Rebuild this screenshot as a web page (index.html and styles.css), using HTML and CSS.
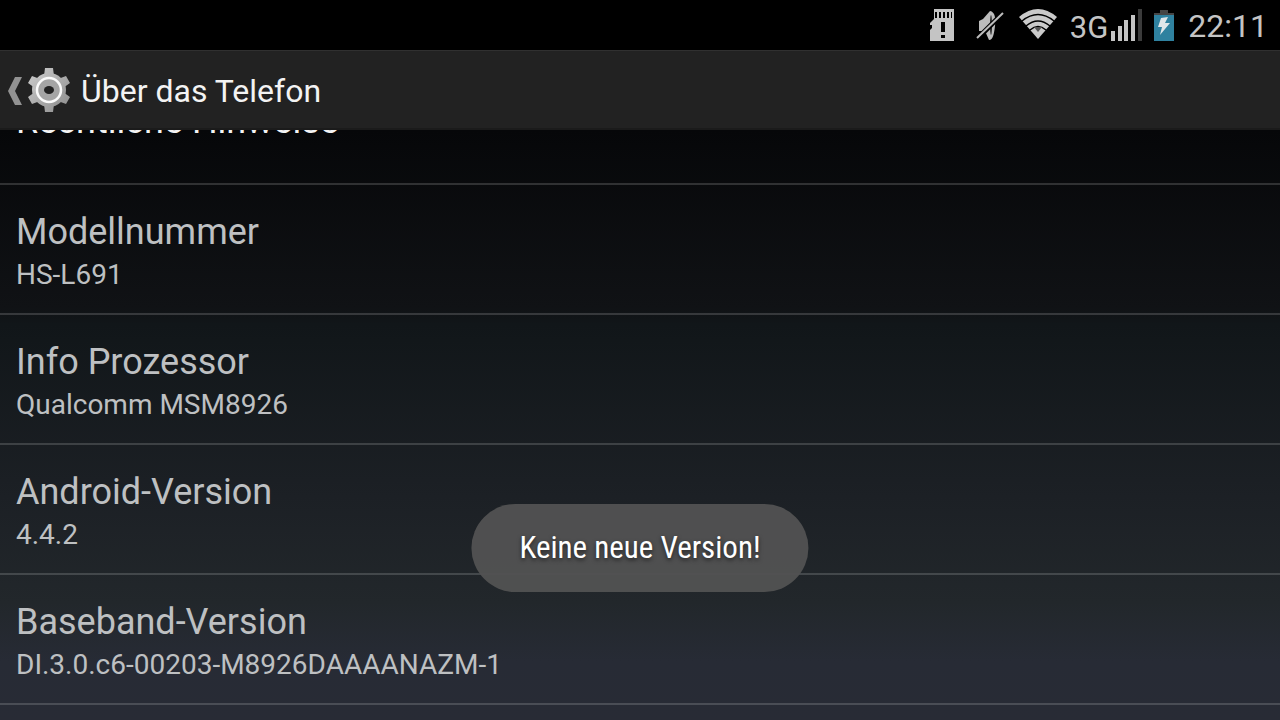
FILE: index.html
```html
<!DOCTYPE html>
<html lang="de">
<head>
<meta charset="utf-8">
<meta name="viewport" content="width=device-width, initial-scale=1">
<title>Über das Telefon</title>
<link rel="stylesheet" href="styles.css">
</head>
<body>
<div class="status-bar">
  <svg class="icon-sd" width="24" height="32" viewBox="0 0 24 32" aria-hidden="true">
    <path fill="#c4c4c4" d="M4 0H24V32H0V21L2 19V16H0V14L4 10Z"/>
    <path fill="#000" d="M5 3h2v6H5zM9 3h2v6H9zM13 3h2v6h-2zM17 3h2v6h-2zM21 3h1v6h-1zM11 13h4v10h-4zM11 26h4v3h-4z"/>
  </svg>
  <svg class="icon-mute" width="28" height="32" viewBox="0 0 28 32" aria-hidden="true">
    <path fill="#bcbcbc" d="M3 12L7 10L14 2C19 3 20 9 19 17C18 25 17 31 13 31L9 22H3Z"/>
    <ellipse cx="15" cy="16" rx="1" ry="10" fill="#222"/>
    <path stroke="#000" stroke-width="5" d="M2 29L26 5"/>
    <path stroke="#bcbcbc" stroke-width="2" d="M1 29L27 4"/>
  </svg>
  <svg class="icon-wifi" width="40" height="32" viewBox="0 0 40 32" aria-hidden="true">
    <path fill="#cacaca" d="M1 8Q20 -8 39 8L20 30Z"/>
    <path fill="none" stroke="#000" stroke-width="1.5" d="M4 12Q20 -1 36 12M8 17Q20 7 32 17M12 21Q20 14 28 21"/>
    <path fill="#555" d="M16 18H24L20 23Z"/>
  </svg>
  <span class="network">3G</span>
  <svg class="icon-signal" width="32" height="32" viewBox="0 0 32 32" aria-hidden="true">
    <path fill="#c4c4c4" d="M1 22h4v10H1zM8 17h4v15H8zM14 11h4v21h-4zM21 6h4v26h-4z"/>
    <path fill="#3b3b3b" d="M28 0h4v32h-4z"/>
  </svg>
  <svg class="icon-battery" width="20" height="32" viewBox="0 0 20 32" aria-hidden="true">
    <path fill="#454545" d="M6 1h8v3h6v3H0V4h6z"/>
    <path fill="#2f819f" d="M0 6h20v26H0z"/>
    <path fill="#e0e7ea" d="M7 9L14 8L11 14L16 14L6 26L8 18L4 18Z"/>
  </svg>
  <time class="clock">22:11</time>
</div>

<header class="action-bar">
  <button class="up-button" type="button" aria-label="Zurück">
    <svg width="72" height="48" viewBox="0 0 72 48" aria-hidden="true">
      <defs>
        <linearGradient id="metal" x1="0" y1="0" x2="1" y2="1">
          <stop offset="0" stop-color="#cecece"/>
          <stop offset="1" stop-color="#8c8c8c"/>
        </linearGradient>
      </defs>
      <path fill="#929292" d="M15 11H22L15 25L22 39H15L8 25Z"/>
      <g fill="url(#metal)">
        <circle cx="49" cy="24" r="17"/>
        <path d="M45 2h8l1 8H44zM45 46h8l1-8H44zM32 10l-4 7 7 5 5-9zM66 10l4 7-7 5-5-9zM32 38l-4-7 7-5 5 9zM66 38l4-7-7-5-5 9z"/>
      </g>
      <circle cx="49" cy="24" r="12" fill="#a5a5a5" stroke="#fafafa" stroke-width="2.5"/>
      <ellipse cx="49" cy="24" rx="5" ry="4" fill="#222"/>
    </svg>
  </button>
  <h1 class="title">Über das Telefon</h1>
</header>

<main class="content">
  <ul class="list">
    <li class="row row-link"><h2 class="row-title">Rechtliche Hinweise</h2></li>
    <li class="row"><h2 class="row-title">Modellnummer</h2><p class="row-summary">HS-L691</p></li>
    <li class="row"><h2 class="row-title">Info Prozessor</h2><p class="row-summary">Qualcomm MSM8926</p></li>
    <li class="row"><h2 class="row-title">Android-Version</h2><p class="row-summary">4.4.2</p></li>
    <li class="row"><h2 class="row-title">Baseband-Version</h2><p class="row-summary">DI.3.0.c6-00203-M8926DAAAANAZM-1</p></li>
  </ul>
</main>

<div class="toast" role="status">Keine neue Version!</div>
</body>
</html>
```

FILE: styles.css
```css
* { box-sizing: border-box; }

body {
  margin: 0;
  height: 100vh;
  display: flex;
  flex-direction: column;
  overflow: hidden;
  position: relative;
  background: #000;
  color: #bec0c2;
  font-family: Roboto, "Noto Sans", sans-serif;
}

h1, h2, p, ul { margin: 0; padding: 0; font-weight: 400; }

.status-bar {
  flex: none;
  display: flex;
  align-items: center;
  justify-content: flex-end;
  height: 50px;
  padding-right: 12px;
  color: #c4c4c4;
}

.icon-sd { margin-right: 22px; }
.icon-mute { margin-right: 14px; }
.icon-wifi { margin-right: 12px; }
.icon-signal { margin: 0 12px 0 2px; }
.icon-battery { margin-right: 14px; }

.network { font-size: 31px; line-height: 32px; padding-top: 6px; }
.clock { font-size: 32px; line-height: 36px; padding-top: 2px; }

.action-bar {
  flex: none;
  display: flex;
  align-items: center;
  gap: 9px;
  height: 80px;
  background: #222;
  border-top: 1px solid #303030;
  border-bottom: 2px solid #1b1b1b;
}

.up-button {
  display: flex;
  padding: 0;
  border: 0;
  background: none;
}

.title { color: #f3f3f3; font-size: 32px; line-height: 40px; padding-top: 2px; }

.content {
  flex: 1;
  min-height: 0;
  overflow: hidden;
  background: linear-gradient(#060709, #101215 30%, #111619 33%, #1c2025 62%, #22272b 80%, #272b35 90%, #282b35);
}

/* The list is scrolled so the first row is partly out of view. */
.list { list-style: none; margin-top: -75px; }

.row {
  display: flex;
  flex-direction: column;
  justify-content: center;
  height: 130px;
  padding: 6px 16px 0;
  border-bottom: 2px solid rgba(255, 255, 255, 0.16);
}

.row-title { font-size: 36px; line-height: 46px; }
.row-summary { font-size: 28px; line-height: 40px; }
.row-link { padding-top: 4px; color: #f3f3f3; }

.toast {
  position: absolute;
  left: 50%;
  bottom: 128px;
  transform: translateX(-50%);
  padding: 24px 48px;
  border-radius: 44px;
  background: rgba(82, 82, 82, 0.95);
  color: #fff;
  font-family: "Roboto Condensed", Roboto, sans-serif;
  font-size: 31px;
  line-height: 40px;
  white-space: nowrap;
  text-shadow: 0 2px 4px rgba(0, 0, 0, 0.6);
}
```
